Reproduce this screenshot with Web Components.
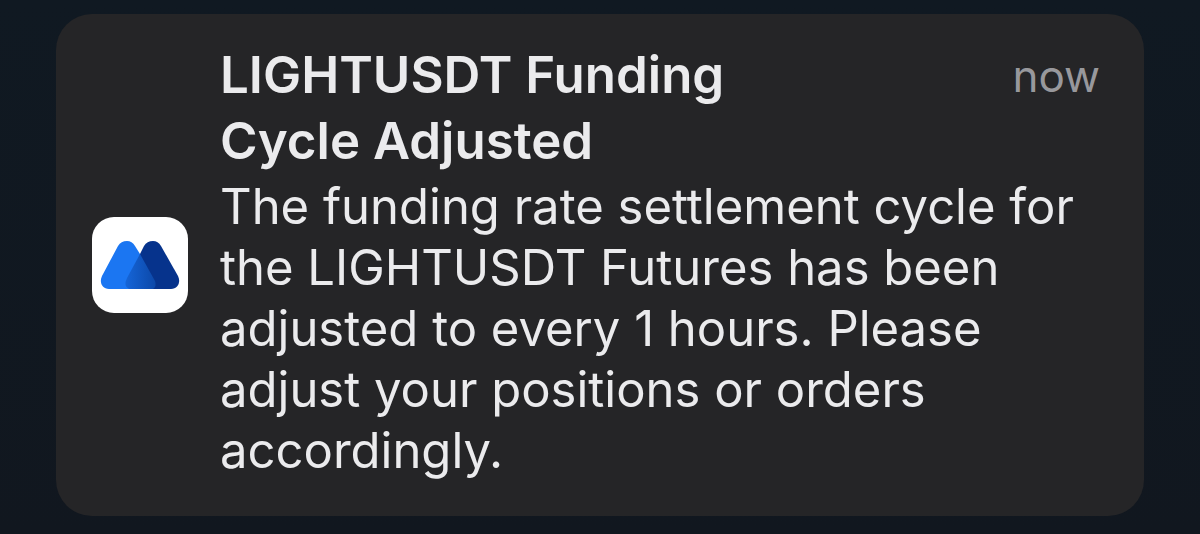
<!DOCTYPE html>
<html lang="en">
<head>
<meta charset="utf-8">
<title>Notification</title>
<style>
html{min-height:100%;background:#10171f}
body{margin:0;font-family:Inter,"Liberation Sans",sans-serif}
</style>
</head>
<body>
<notification-screen>
<notification-card>
<app-icon slot="icon"></app-icon>
<span slot="title">LIGHTUSDT Funding Cycle Adjusted</span>
<span slot="time">now</span>
<span slot="body">The funding rate settlement cycle for the LIGHTUSDT Futures has been adjusted to every 1 hours. Please adjust your positions or orders accordingly.</span>
</notification-card>
</notification-screen>
<script>
class NotificationScreen extends HTMLElement{
constructor(){super();this.attachShadow({mode:"open"}).innerHTML=`<style>
:host{display:block;padding:14px 56px 18px;background:linear-gradient(#101922,#11171f)}
</style><slot></slot>`}
}
class AppIcon extends HTMLElement{
constructor(){super();this.attachShadow({mode:"open"}).innerHTML=`<style>
:host{display:block;width:96px;height:96px;border-radius:22px;background:#fff}
svg{display:block;width:100%;height:100%}
</style><svg viewBox="0 0 96 96" aria-hidden="true">
<defs>
<linearGradient id="overlap" x1="0" y1="0" x2="1" y2="0"><stop offset="0" stop-color="#1565d8"/><stop offset="1" stop-color="#0c48a8"/></linearGradient>
</defs>
<path fill="#06338c" d="M48 37L52 29Q55 24 61 24Q66 24 69 29L86 59C89 65 86 72 79 72H48Z"/>
<path fill="#1b76f2" d="M48 37L43 29Q40 24 35 24Q29 24 26 29L10 59C7 65 10 72 17 72H50Z"/>
<path fill="url(#overlap)" d="M48 37L63 64Q65 69 61 72H37Q31 69 35 61Z"/>
</svg>`}
}
class NotificationCard extends HTMLElement{
constructor(){super();this.attachShadow({mode:"open"}).innerHTML=`<style>
:host{display:block;border-radius:36px;background:#252527;color:#ebebed}
article{display:grid;grid-template-columns:96px minmax(0,1fr);gap:32px;align-items:center;padding:0 44px 0 36px}
.content{padding:28px 0 35px}
header{display:flex;justify-content:space-between;align-items:flex-start;margin-bottom:2px}
h1{margin:0;max-width:560px;font-size:51px;line-height:66px;font-weight:600}
.time{font-size:44px;line-height:68px;color:#98989c}
p{margin:0;font-size:49px;line-height:61px}
</style><article><slot name="icon"></slot><div class="content"><header><h1><slot name="title"></slot></h1><div class="time"><slot name="time"></slot></div></header><p><slot name="body"></slot></p></div></article>`}
}
customElements.define("notification-screen",NotificationScreen);
customElements.define("app-icon",AppIcon);
customElements.define("notification-card",NotificationCard);
</script>
</body>
</html>
